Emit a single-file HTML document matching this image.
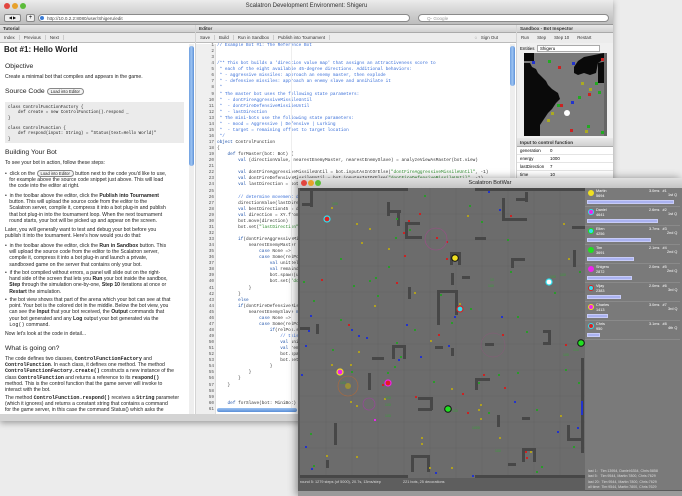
<!DOCTYPE html>
<html><head><meta charset="utf-8"><style>
*{margin:0;padding:0;box-sizing:border-box}
body{width:682px;height:496px;overflow:hidden;background:#ececec;font-family:"Liberation Sans",sans-serif;position:relative}
.a{position:absolute}
.win{left:0;top:0;width:613px;height:421px;background:#d4d4d4;box-shadow:0 2px 6px rgba(0,0,0,.35)}
.tb{left:0;top:0;width:613px;height:12px;background:linear-gradient(#ececec,#d2d2d2);font-size:6px;color:#333;text-align:center;line-height:12px}
.tl{top:3px;width:6px;height:6px;border-radius:50%}
.tool{left:0;top:12px;width:613px;height:13px;background:linear-gradient(#d2d2d2,#bdbdbd);border-bottom:1px solid #999}
.field{background:#fff;border:1px solid #8a8a8a;border-radius:4px;height:8px;font-size:4.6px;line-height:7px;color:#444;padding-left:8px}
.ph{height:8px;background:linear-gradient(#e8e8e8,#d0d0d0);font-size:4.6px;font-weight:bold;color:#333;line-height:8px;padding-left:3px;border-bottom:1px solid #aaa}
.bar{height:10px;background:#ececec;font-size:4.4px;color:#333;line-height:10px;border-bottom:1px solid #bbb}
.bar span{padding:0 4px;border-right:1px solid #ccc}
.tut{font-size:5.1px;line-height:6.2px;color:#222}
.tut h1{font-size:8px;font-weight:bold;position:absolute}
.tut h2{font-size:6.8px;font-weight:normal;position:absolute}
.tut p{position:absolute}
.btn{display:inline-block;border:1px solid #888;border-radius:4px;font-size:4.2px;padding:0 3px;line-height:5px;background:#f4f4f4}
.code{font-family:"Liberation Mono",monospace;font-size:4.4px;line-height:6.07px;white-space:pre;color:#333}
.ln{font-family:"Liberation Mono",monospace;font-size:4.4px;line-height:6.07px;white-space:pre;color:#555;text-align:right}
.c{color:#3a6fd8}.k{color:#2255aa}.s{color:#2a8a2a}
.sb div{font-size:4.4px}
.mono{font-family:"Liberation Mono",monospace}
.sc{font-size:3.8px;color:#fff;line-height:4.5px}
</style></head><body>
<div class="a win"></div>
<div class="a tb">Scalatron Development Environment: Shigeru</div>
<div class="a tl" style="left:4px;background:#e2463f"></div>
<div class="a tl" style="left:12px;background:#e7a12a"></div>
<div class="a tl" style="left:20px;background:#5cbc3a"></div>
<div class="a tool"></div>
<div class="a" style="left:4px;top:14px;width:17px;height:8px;border:1px solid #888;border-radius:2px;background:#eee;font-size:4px;line-height:6px;text-align:center">◀ ▶</div>
<div class="a" style="left:26px;top:14px;width:9px;height:8px;border:1px solid #888;border-radius:2px;background:#eee;font-size:6px;line-height:6px;text-align:center">+</div>
<div class="a field" style="left:38px;top:14px;width:372px">http://10.0.2.2:8080/user/Shigeru/edit</div>
<div class="a" style="left:40px;top:16px;width:4px;height:4px;border-radius:50%;background:#3a7bd5"></div>
<div class="a field" style="left:418px;top:14px;width:191px;color:#999">Q- Google</div>

<!-- Tutorial -->
<div class="a" style="left:0;top:25px;width:195px;height:389px;background:#fff"></div>
<div class="a ph" style="left:0;top:25px;width:195px">Tutorial</div>
<div class="a bar" style="left:0;top:33px;width:195px"><span>Index</span><span>Previous</span><span>Next</span></div>
<div class="a" style="left:189px;top:44px;width:5px;height:370px;background:#eee"></div>
<div class="a" style="left:189px;top:46px;width:5px;height:120px;background:linear-gradient(90deg,#6fa0e0,#9cc3f2,#5b8fd6);border-radius:3px"></div>
<div class="a tut" style="left:0;top:44px;width:188px;height:370px;overflow:hidden">
<h1 style="left:4px;top:3px">Bot #1: Hello World</h1>
<h2 style="left:5px;top:20px">Objective</h2>
<p style="left:5px;top:30px">Create a minimal bot that compiles and appears in the game.</p>
<h2 style="left:5px;top:44px">Source Code <span class="btn">Load into Editor</span></h2>
<div class="a mono" style="left:5px;top:58px;width:179px;height:41px;background:#ebebeb;font-size:4.2px;line-height:5.3px;white-space:pre;padding:4px 3px">class ControlFunctionFactory {
    def create = new ControlFunction().respond _
}

class ControlFunction {
    def respond(input: String) = "Status(text=Hello World)"
}</div>
<h2 style="left:5px;top:106px">Building Your Bot</h2>
<p style="left:5px;top:116px">To see your bot in action, follow these steps:</p>
<p style="left:5px;top:126px;width:180px">• &nbsp;click on the <span class="btn">Load into Editor</span> button next to the code you'd like to use,<br>&nbsp;&nbsp;&nbsp;for example above the source code snippet just above. This will load<br>&nbsp;&nbsp;&nbsp;the code into the editor at right.</p>
<p style="left:5px;top:149px;width:180px">• &nbsp;in the toolbar above the editor, click the <b>Publish into Tournament</b><br>&nbsp;&nbsp;&nbsp;button. This will upload the source code from the editor to the<br>&nbsp;&nbsp;&nbsp;Scalatron server, compile it, compress it into a bot plug-in and publish<br>&nbsp;&nbsp;&nbsp;that bot plug-in into the tournament loop. When the next tournament<br>&nbsp;&nbsp;&nbsp;round starts, your bot will be picked up and appear on the screen.</p>
<p style="left:5px;top:183px;width:180px">Later, you will generally want to test and debug your bot before you<br>publish it into the tournament. Here's how would you do that:</p>
<p style="left:5px;top:199px;width:180px">• &nbsp;in the toolbar above the editor, click the <b>Run in Sandbox</b> button. This<br>&nbsp;&nbsp;&nbsp;will upload the source code from the editor to the Scalatron server,<br>&nbsp;&nbsp;&nbsp;compile it, compress it into a bot plug-in and launch a private,<br>&nbsp;&nbsp;&nbsp;sandboxed game on the server that contains only your bot.</p>
<p style="left:5px;top:226px;width:180px">• &nbsp;if the bot compiled without errors, a panel will slide out on the right-<br>&nbsp;&nbsp;&nbsp;hand side of the screen that lets you <b>Run</b> your bot inside the sandbox,<br>&nbsp;&nbsp;&nbsp;<b>Step</b> through the simulation one-by-one, <b>Step 10</b> iterations at once or<br>&nbsp;&nbsp;&nbsp;<b>Restart</b> the simulation.</p>
<p style="left:5px;top:253px;width:180px">• &nbsp;the bot view shows that part of the arena which your bot can see at that<br>&nbsp;&nbsp;&nbsp;point. Your bot is the colored dot in the middle. Below the bot view, you<br>&nbsp;&nbsp;&nbsp;can see the <b>Input</b> that your bot received, the <b>Output</b> commands that<br>&nbsp;&nbsp;&nbsp;your bot generated and any <b>Log</b> output your bot generated via the<br>&nbsp;&nbsp;&nbsp;<span class="mono">Log()</span> command.</p>
<p style="left:5px;top:287px">Now let's look at the code in detail...</p>
<h2 style="left:5px;top:302px">What is going on?</h2>
<p style="left:5px;top:312px;width:182px">The code defines two classes, <b class="mono">ControlFunctionFactory</b> and<br><b class="mono">ControlFunction</b>. In each class, it defines one method. The method<br><b class="mono">ControlFunctionFactory.create()</b> constructs a new instance of the<br>class <b class="mono">ControlFunction</b> and returns a reference to its <b class="mono">respond()</b><br>method. This is the control function that the game server will invoke to<br>interact with the bot.</p>
<p style="left:5px;top:351px;width:182px">The method <b class="mono">ControlFunction.respond()</b> receives a <b class="mono">String</b> parameter<br>(which it ignores) and returns a constant string that contains a command<br>for the game server, in this case the command Status() which asks the</p>
</div>

<!-- Editor -->
<div class="a" style="left:196px;top:25px;width:320px;height:389px;background:#fff"></div>
<div class="a ph" style="left:196px;top:25px;width:320px">Editor</div>
<div class="a bar" style="left:196px;top:33px;width:320px"><span>Save</span><span>Build</span><span>Run in Sandbox</span><span>Publish into Tournament</span><i style="position:absolute;right:18px;font-style:normal">◌ &nbsp; Sign Out</i></div>
<div class="a" style="left:196px;top:44px;width:20px;height:370px;background:#efefef;border-right:1px solid #ddd"></div>
<div class="a ln" style="left:196px;top:43px;width:18px">1
2
3
4
5
6
7
8
9
10
11
12
13
14
15
16
17
18
19
20
21
22
23
24
25
26
27
28
29
30
31
32
33
34
35
36
37
38
39
40
41
42
43
44
45
46
47
48
49
50
51
52
53
54
55
56
57
58
59
60
61</div>
<div class="a code" style="left:217px;top:43px;width:292px;overflow:hidden"><span class="c">// Example Bot #1: The Reference Bot</span>


<span class="c">/** This bot builds a 'direction value map' that assigns an attractiveness score to
 * each of the eight available 45-degree directions. Additional behaviors:
 * - aggressive missiles: approach an enemy master, then explode
 * - defensive missiles: approach an enemy slave and annihilate it
 *
 * The master bot uses the following state parameters:
 *  - dontFireAggressiveMissileUntil
 *  - dontFireDefensiveMissileUntil
 *  - lastDirection
 * The mini-bots use the following state parameters:
 *  - mood = Aggressive | Defensive | Lurking
 *  - target = remaining offset to target location
 */</span>
<span class="k">object</span> ControlFunction
{
    <span class="k">def</span> forMaster(bot: Bot) {
        <span class="k">val</span> (directionValue, nearestEnemyMaster, nearestEnemySlave) = analyzeViewAsMaster(bot.view)

        <span class="k">val</span> dontFireAggressiveMissileUntil = bot.inputAsIntOrElse(<span class="s">"dontFireAggressiveMissileUntil"</span>, -1)
        <span class="k">val</span> dontFireDefensiveMissileUntil = bot.inputAsIntOrElse(<span class="s">"dontFireDefensiveMissileUntil"</span>, -1)
        <span class="k">val</span> lastDirection = bot.inputAsIntOrElse(<span class="s">"lastDirection"</span>, 0)

        <span class="c">// determine movement direction</span>
        directionValue(lastDirection) += 10
        <span class="k">val</span> bestDirection45 = directionValue.zipWithIndex.maxBy(_._1)._2
        <span class="k">val</span> direction = XY.fromDirection45(bestDirection45)
        bot.move(direction)
        bot.set(<span class="s">"lastDirection"</span> -> bestDirection45)

        <span class="k">if</span>(dontFireAggressiveMissileUntil &lt; bot.time)
            nearestEnemyMaster <span class="k">match</span> {
                <span class="k">case</span> None =>
                <span class="k">case</span> Some(relPos) =>
                    <span class="k">val</span> unitDelta = relPos.signum
                    <span class="k">val</span> remainder = relPos - unitDelta
                    bot.spawn(unitDelta)
                    bot.set(<span class="s">"dontFire"</span>)
            }
        }
        <span class="k">else</span>
        <span class="k">if</span>(dontFireDefensiveMissileUntil)
            nearestEnemySlave <span class="k">match</span> {
                <span class="k">case</span> None =>
                <span class="k">case</span> Some(relPos) =>
                    <span class="k">if</span>(relPos.stepCount)
                        <span class="c">// this</span>
                        <span class="k">val</span> unitDelta
                        <span class="k">val</span> remainder
                        bot.spawn
                        bot.set
                    }
            }
        }
    }


    <span class="k">def</span> forSlave(bot: MiniBot) {
</div>
<div class="a" style="left:291px;top:44px;width:1px;height:365px;background:#eee"></div>
<div class="a" style="left:510px;top:44px;width:5px;height:370px;background:#eee"></div>
<div class="a" style="left:510px;top:46px;width:5px;height:40px;background:linear-gradient(90deg,#6fa0e0,#9cc3f2,#5b8fd6);border-radius:3px"></div>
<div class="a" style="left:217px;top:408px;width:80px;height:4px;background:linear-gradient(#9cc3f2,#5b8fd6);border-radius:2px"></div>

<!-- Sandbox -->
<div class="a" style="left:517px;top:25px;width:96px;height:389px;background:#f0f0f0"></div>
<div class="a ph" style="left:517px;top:25px;width:96px">Sandbox - Bot Inspector</div>
<div class="a bar" style="left:517px;top:33px;width:96px;border:none"><span style="border:none">Run</span><span style="border:none">Step</span><span style="border:none">Step 10</span><span style="border:none">Restart</span></div>
<div class="a" style="left:517px;top:45px;width:96px;font-size:4.4px;line-height:8px;padding-left:3px">Entities</div>
<div class="a" style="left:537px;top:45px;width:63px;height:7px;background:#fff;border:1px solid #aaa;font-size:4.4px;line-height:5px;padding-left:2px">Shigeru</div>
<svg class="a" style="left:524px;top:53px" width="83" height="83">
<rect width="83" height="83" fill="#7a7a7a"/>
<polygon points="0,10 6,10 8,14 12,16 14,20 18,24 22,28 24,32 28,36 34,40 36,46 32,50 28,56 24,60 20,66 16,72 16,83 0,83" fill="#0a0a0a"/>
<polygon points="0,0 10,0 10,8 0,8" fill="#0a0a0a"/>
<polygon points="50,14 54,8 60,4 70,2 80,0 80,6 74,10 72,20 66,22 60,20 54,22 50,20" fill="#0a0a0a"/>
<polygon points="74,10 83,8 83,30 74,30" fill="#0a0a0a"/>
<rect x="80" y="0" width="3" height="83" fill="#666"/>
<circle cx="43" cy="60" r="3" fill="#fff"/>
<rect x="8" y="8" width="3" height="3" fill="#2233cc"/><rect x="24" y="7" width="3" height="3" fill="#22aa22"/><rect x="34" y="13" width="3" height="3" fill="#cc2222"/><rect x="48" y="9" width="3" height="3" fill="#2233cc"/><rect x="77" y="5" width="3" height="3" fill="#cc2222"/><rect x="57" y="29" width="3" height="3" fill="#aaaa22"/><rect x="71" y="29" width="3" height="3" fill="#22aa22"/><rect x="65" y="35" width="3" height="3" fill="#aaaa22"/><rect x="64" y="40" width="3" height="3" fill="#cc2222"/><rect x="74" y="38" width="3" height="3" fill="#22aa22"/><rect x="54" y="43" width="3" height="3" fill="#22aa22"/><rect x="47" y="48" width="3" height="3" fill="#2233cc"/><rect x="36" y="51" width="3" height="3" fill="#cc2222"/><rect x="33" y="51" width="3" height="3" fill="#22aa22"/><rect x="27" y="59" width="3" height="3" fill="#aaaa22"/><rect x="23" y="66" width="3" height="3" fill="#aaaa22"/><rect x="63" y="72" width="3" height="3" fill="#22aa22"/><rect x="46" y="76" width="3" height="3" fill="#cc2222"/><rect x="61" y="77" width="3" height="3" fill="#aaaa22"/><rect x="77" y="78" width="3" height="3" fill="#22aa22"/>
</svg>
<div class="a ph" style="left:517px;top:138px;width:96px;height:9px;line-height:9px">Input to control function</div>
<div class="a sb" style="left:517px;top:147px;width:96px;background:#fff">
<div style="height:8px;line-height:8px;padding-left:3px;border-bottom:1px solid #e4e4e4;position:relative">generation<span style="position:absolute;left:33px">0</span></div>
<div style="height:8px;line-height:8px;padding-left:3px;border-bottom:1px solid #e4e4e4;position:relative">energy<span style="position:absolute;left:33px">1000</span></div>
<div style="height:8px;line-height:8px;padding-left:3px;border-bottom:1px solid #e4e4e4;position:relative">lastDirection<span style="position:absolute;left:33px">7</span></div>
<div style="height:8px;line-height:8px;padding-left:3px;position:relative">time<span style="position:absolute;left:33px">10</span></div>
</div>

<!-- BotWar window -->
<div class="a" style="left:298px;top:178px;width:384px;height:318px;background:#5a5a5a;box-shadow:-2px 0 8px rgba(0,0,0,.4)"></div>
<div class="a" style="left:298px;top:178px;width:384px;height:10px;background:linear-gradient(#e0e0e0,#c4c4c4);font-size:5.5px;line-height:10px;text-align:center;color:#222">Scalatron BotWar</div>
<div class="a tl" style="left:301px;top:180px;background:#e2463f"></div>
<div class="a tl" style="left:308px;top:180px;background:#e7a12a"></div>
<div class="a tl" style="left:315px;top:180px;background:#5cbc3a"></div>
<svg class="a" style="left:300px;top:188px" width="285" height="290">
<rect width="285" height="290" fill="#6c6c6c"/>
<g stroke="#646464" stroke-width="0.6">
<path d="M26 0V290M52 0V290M78 0V290M104 0V290M130 0V290M156 0V290M182 0V290M208 0V290M234 0V290M260 0V290M0 26H285M0 52H285M0 78H285M0 104H285M0 130H285M0 156H285M0 182H285M0 208H285M0 234H285M0 260H285"/>
</g>
<g fill="#474747">
<rect x="0" y="0" width="108" height="3"/><rect x="175" y="0" width="110" height="3"/>
<rect x="0" y="287" width="108" height="3"/><rect x="175" y="287" width="110" height="3"/>
<rect x="10" y="2" width="3" height="17"/><rect x="2" y="15" width="10" height="3"/>
<rect x="87" y="14" width="3" height="14"/><rect x="87" y="22" width="14" height="3"/><rect x="97" y="22" width="3" height="16"/>
<rect x="105" y="34" width="15" height="3"/><rect x="105" y="48" width="17" height="3"/><rect x="105" y="34" width="3" height="17"/>
<rect x="202" y="10" width="3" height="22"/><rect x="202" y="30" width="25" height="3"/><rect x="216" y="10" width="12" height="3"/><rect x="225" y="4" width="3" height="10"/>
<rect x="175" y="49" width="11" height="3"/><rect x="272" y="38" width="13" height="3"/>
<rect x="211" y="70" width="14" height="3"/><rect x="211" y="70" width="3" height="10"/>
<rect x="273" y="62" width="3" height="17"/>
<rect x="150" y="65" width="3" height="12"/><rect x="158" y="65" width="3" height="12"/><rect x="150" y="64" width="11" height="3"/>
<rect x="151" y="85" width="3" height="12"/><rect x="162" y="88" width="8" height="3"/>
<rect x="108" y="99" width="3" height="12"/>
<rect x="137" y="102" width="20" height="3"/><rect x="137" y="102" width="3" height="35"/><rect x="155" y="102" width="3" height="25"/>
<rect x="0" y="139" width="10" height="3"/><rect x="16" y="136" width="3" height="10"/>
<rect x="92" y="157" width="13" height="3"/><rect x="92" y="157" width="3" height="14"/><rect x="103" y="157" width="3" height="14"/>
<rect x="72" y="169" width="12" height="3"/><rect x="135" y="158" width="8" height="3"/><rect x="151" y="160" width="3" height="8"/>
<rect x="185" y="155" width="9" height="3"/>
<rect x="243" y="142" width="8" height="3"/><rect x="248" y="142" width="3" height="15"/><rect x="243" y="154" width="8" height="3"/>
<rect x="68" y="185" width="3" height="17"/>
<rect x="175" y="190" width="15" height="3"/><rect x="175" y="190" width="3" height="12"/>
<rect x="118" y="209" width="14" height="3"/><rect x="130" y="209" width="3" height="13"/><rect x="118" y="220" width="14" height="3"/>
<rect x="197" y="227" width="3" height="12"/><rect x="222" y="229" width="8" height="3"/>
<rect x="34" y="235" width="3" height="22"/>
<rect x="267" y="237" width="3" height="16"/><rect x="267" y="250" width="14" height="3"/>
<rect x="281" y="170" width="3" height="95"/>
<rect x="111" y="267" width="3" height="17"/><rect x="111" y="267" width="18" height="3"/><rect x="127" y="267" width="3" height="17"/>
<rect x="222" y="260" width="3" height="14"/><rect x="222" y="260" width="13" height="3"/><rect x="233" y="260" width="3" height="14"/>
<rect x="208" y="275" width="8" height="3"/><rect x="26" y="272" width="3" height="8"/>
</g>
<rect x="281" y="213" width="2" height="14" fill="#2233cc"/>
<g>
<rect x="124" y="7" width="2" height="2" fill="#2a9a2a"/><rect x="31" y="19" width="2" height="2" fill="#b0a020"/><rect x="169" y="17" width="2" height="2" fill="#2a9a2a"/><rect x="188" y="3" width="2" height="2" fill="#2233cc"/><rect x="119" y="25" width="2" height="2" fill="#cc2222"/><rect x="96" y="30" width="2" height="2" fill="#2a9a2a"/><rect x="108" y="32" width="2" height="2" fill="#cc2222"/><rect x="167" y="27" width="2" height="2" fill="#b0a020"/><rect x="181" y="33" width="2" height="2" fill="#2a9a2a"/><rect x="199" y="21" width="2" height="2" fill="#2233cc"/><rect x="210" y="27" width="2" height="2" fill="#cc2222"/><rect x="263" y="35" width="2" height="2" fill="#b0a020"/>
<rect x="56" y="35" width="2" height="2" fill="#b0a020"/><rect x="69" y="40" width="2" height="2" fill="#b0a020"/><rect x="103" y="44" width="2" height="2" fill="#cc2222"/><rect x="109" y="41" width="2" height="2" fill="#2a9a2a"/><rect x="95" y="49" width="2" height="2" fill="#2a9a2a"/><rect x="136" y="49" width="2" height="2" fill="#cc2222"/><rect x="146" y="53" width="2" height="2" fill="#cc2222"/><rect x="207" y="51" width="2" height="2" fill="#2a9a2a"/><rect x="61" y="54" width="2" height="2" fill="#b0a020"/><rect x="88" y="60" width="2" height="2" fill="#b0a020"/>
<rect x="40" y="70" width="2" height="2" fill="#2a9a2a"/><rect x="104" y="67" width="2" height="2" fill="#cc2222"/><rect x="146" y="70" width="2" height="2" fill="#cc2222"/><rect x="268" y="70" width="2" height="2" fill="#b0a020"/><rect x="88" y="78" width="2" height="2" fill="#2a9a2a"/><rect x="210" y="83" width="2" height="2" fill="#2a9a2a"/><rect x="279" y="83" width="2" height="2" fill="#2a9a2a"/>
<rect x="3" y="93" width="2" height="2" fill="#2a9a2a"/><rect x="21" y="91" width="2" height="2" fill="#cc2222"/><rect x="69" y="92" width="2" height="2" fill="#2a9a2a"/><rect x="75" y="89" width="2" height="2" fill="#2a9a2a"/><rect x="53" y="97" width="2" height="2" fill="#2a9a2a"/><rect x="96" y="94" width="2" height="2" fill="#cc2222"/><rect x="114" y="104" width="2" height="2" fill="#b0a020"/><rect x="77" y="107" width="2" height="2" fill="#2a9a2a"/><rect x="140" y="106" width="2" height="2" fill="#2a9a2a"/><rect x="254" y="104" width="2" height="2" fill="#2a9a2a"/>
<rect x="13" y="112" width="2" height="2" fill="#2a9a2a"/><rect x="74" y="117" width="2" height="2" fill="#b0a020"/><rect x="159" y="115" width="2" height="2" fill="#b0a020"/><rect x="170" y="120" width="2" height="2" fill="#2a9a2a"/><rect x="10" y="127" width="2" height="2" fill="#2233cc"/><rect x="40" y="131" width="2" height="2" fill="#2a9a2a"/><rect x="154" y="128" width="2" height="2" fill="#2233cc"/><rect x="201" y="128" width="2" height="2" fill="#2233cc"/><rect x="217" y="128" width="2" height="2" fill="#2a9a2a"/>
<rect x="48" y="136" width="2" height="2" fill="#cc2222"/><rect x="106" y="136" width="2" height="2" fill="#2233cc"/><rect x="151" y="134" width="2" height="2" fill="#2a9a2a"/><rect x="8" y="142" width="2" height="2" fill="#2233cc"/><rect x="51" y="141" width="2" height="2" fill="#2233cc"/><rect x="114" y="141" width="2" height="2" fill="#2a9a2a"/><rect x="226" y="143" width="2" height="2" fill="#2a9a2a"/><rect x="58" y="147" width="2" height="2" fill="#2233cc"/><rect x="66" y="149" width="2" height="2" fill="#2233cc"/><rect x="138" y="146" width="2" height="2" fill="#cc2222"/><rect x="202" y="146" width="2" height="2" fill="#cc2222"/>
<rect x="96" y="154" width="2" height="2" fill="#2a9a2a"/><rect x="130" y="152" width="2" height="2" fill="#b0a020"/><rect x="5" y="157" width="2" height="2" fill="#2233cc"/><rect x="148" y="157" width="2" height="2" fill="#2233cc"/><rect x="265" y="156" width="2" height="2" fill="#cc2222"/><rect x="32" y="161" width="2" height="2" fill="#2a9a2a"/><rect x="58" y="163" width="2" height="2" fill="#b0a020"/><rect x="100" y="168" width="2" height="2" fill="#2a9a2a"/><rect x="98" y="171" width="2" height="2" fill="#2233cc"/><rect x="120" y="168" width="2" height="2" fill="#2233cc"/>
<rect x="31" y="176" width="2" height="2" fill="#b0a020"/><rect x="50" y="176" width="2" height="2" fill="#b0a020"/><rect x="94" y="178" width="2" height="2" fill="#2a9a2a"/><rect x="1" y="186" width="2" height="2" fill="#2233cc"/><rect x="51" y="183" width="2" height="2" fill="#2a9a2a"/><rect x="87" y="184" width="2" height="2" fill="#2a9a2a"/><rect x="183" y="186" width="2" height="2" fill="#cc2222"/><rect x="198" y="186" width="2" height="2" fill="#2a9a2a"/><rect x="217" y="184" width="2" height="2" fill="#2a9a2a"/><rect x="265" y="181" width="2" height="2" fill="#2a9a2a"/>
<rect x="82" y="196" width="2" height="2" fill="#cc2222"/><rect x="133" y="193" width="2" height="2" fill="#2a9a2a"/><rect x="178" y="194" width="2" height="2" fill="#2a9a2a"/><rect x="204" y="199" width="2" height="2" fill="#cc2222"/><rect x="278" y="194" width="2" height="2" fill="#2a9a2a"/><rect x="151" y="200" width="2" height="2" fill="#b0a020"/><rect x="162" y="205" width="2" height="2" fill="#cc2222"/><rect x="115" y="208" width="2" height="2" fill="#cc2222"/><rect x="84" y="210" width="2" height="2" fill="#b0a020"/><rect x="50" y="213" width="2" height="2" fill="#b0a020"/><rect x="214" y="213" width="2" height="2" fill="#2233cc"/><rect x="56" y="217" width="2" height="2" fill="#b0a020"/><rect x="180" y="216" width="2" height="2" fill="#b0a020"/><rect x="178" y="221" width="2" height="2" fill="#b0a020"/><rect x="236" y="221" width="2" height="2" fill="#2a9a2a"/><rect x="167" y="224" width="2" height="2" fill="#cc2222"/><rect x="188" y="224" width="2" height="2" fill="#2a9a2a"/><rect x="180" y="230" width="2" height="2" fill="#b0a020"/><rect x="260" y="227" width="2" height="2" fill="#b0a020"/><rect x="74" y="231" width="2" height="2" fill="#ee22ee"/>
<rect x="10" y="245" width="2" height="2" fill="#2a9a2a"/><rect x="257" y="243" width="2" height="2" fill="#2233cc"/><rect x="277" y="239" width="2" height="2" fill="#2233cc"/><rect x="121" y="249" width="2" height="2" fill="#b0a020"/><rect x="199" y="249" width="2" height="2" fill="#b0a020"/><rect x="273" y="258" width="2" height="2" fill="#2a9a2a"/><rect x="5" y="258" width="2" height="2" fill="#2233cc"/><rect x="121" y="255" width="2" height="2" fill="#b0a020"/><rect x="225" y="263" width="2" height="2" fill="#cc2222"/><rect x="230" y="263" width="2" height="2" fill="#b0a020"/><rect x="26" y="267" width="2" height="2" fill="#b0a020"/><rect x="56" y="268" width="2" height="2" fill="#b0a020"/><rect x="226" y="269" width="2" height="2" fill="#cc2222"/><rect x="13" y="277" width="2" height="2" fill="#2a9a2a"/><rect x="11" y="280" width="2" height="2" fill="#2233cc"/><rect x="129" y="279" width="2" height="2" fill="#b0a020"/><rect x="151" y="279" width="2" height="2" fill="#b0a020"/><rect x="241" y="278" width="2" height="2" fill="#2a9a2a"/><rect x="135" y="284" width="2" height="2" fill="#2233cc"/><rect x="172" y="287" width="2" height="2" fill="#2233cc"/><rect x="236" y="283" width="2" height="2" fill="#2a9a2a"/>
</g>
<circle cx="136" cy="51" r="11" fill="none" stroke="#a04a8a" stroke-width="0.6"/>
<circle cx="48" cy="198" r="10" fill="none" stroke="#b06a3a" stroke-width="0.6"/>
<circle cx="69" cy="216" r="6" fill="none" stroke="#a040a0" stroke-width="0.6"/>
<circle cx="193" cy="157" r="12" fill="none" stroke="#8a5a7a" stroke-width="0.5"/>
<circle cx="48" cy="198" r="3" fill="#b0a020" opacity=".7"/>
<g font-family="Liberation Sans" font-size="3.5" fill="#3aa03a">
<text x="32" y="17">100</text><text x="250" y="90">100</text><text x="260" y="88">100</text><text x="190" y="93">10</text><text x="188" y="99">100</text><text x="273" y="163">100</text><text x="263" y="168">100</text><text x="40" y="196">100</text><text x="85" y="211">100</text><text x="85" y="218">100</text><text x="85" y="229">100</text><text x="152" y="224">100</text><text x="172" y="241">1000</text><text x="195" y="264">100</text>
</g>
<g stroke="#111" stroke-width="1">
<circle cx="155" cy="70" r="3.3" fill="#f0e020"/>
<circle cx="27" cy="31" r="3" fill="#e02020" stroke="#30e0f0" stroke-width="1.2"/>
<circle cx="249" cy="94" r="3" fill="#fff" stroke="#30e0f0" stroke-width="1.2"/>
<circle cx="160" cy="121" r="3" fill="#30e0f0" stroke="#e02020" stroke-width="1.2"/>
<circle cx="40" cy="184" r="3" fill="#ee22ee" stroke="#f0e020" stroke-width="1.2"/>
<circle cx="88" cy="195" r="3" fill="#e02020" stroke="#ee22ee" stroke-width="1.2"/>
<circle cx="148" cy="221" r="3.3" fill="#20e020"/>
<circle cx="281" cy="155" r="3.3" fill="#20e020"/>
</g>
</svg>
<!-- scoreboard -->
<div class="a" style="left:585px;top:188px;width:97px;height:302px;background:#7a7a7a"></div>
<div class="a" style="left:585px;top:188px;width:95px">
<div style="position:relative;height:19px;border-bottom:1px solid #8a8a8a"><i style="position:absolute;left:3px;top:2px;width:6px;height:6px;border-radius:50%;background:#f0e020"></i><div class="sc" style="position:absolute;left:11px;top:1px">Martin<br>5694</div><div class="sc" style="position:absolute;left:64px;top:1px">3.0ms &nbsp;&nbsp;#1</div><div class="sc" style="position:absolute;left:83px;top:5px">1st Q</div><i style="position:absolute;left:2px;top:12px;width:87px;height:4px;background:#aab2f0;border:1px solid #c8ccf8"></i></div>
<div style="position:relative;height:19px;border-bottom:1px solid #8a8a8a"><i style="position:absolute;left:3px;top:2px;width:6px;height:6px;border-radius:50%;background:#ee22ee;border:1px solid #30e0f0"></i><div class="sc" style="position:absolute;left:11px;top:1px">Daniel<br>4641</div><div class="sc" style="position:absolute;left:64px;top:1px">2.6ms &nbsp;&nbsp;#2</div><div class="sc" style="position:absolute;left:83px;top:5px">1st Q</div><i style="position:absolute;left:2px;top:12px;width:71px;height:4px;background:#aab2f0;border:1px solid #c8ccf8"></i></div>
<div style="position:relative;height:19px;border-bottom:1px solid #8a8a8a"><i style="position:absolute;left:3px;top:2px;width:6px;height:6px;border-radius:50%;background:#30e0f0;border:1px solid #20e020"></i><div class="sc" style="position:absolute;left:11px;top:1px">Ellen<br>4256</div><div class="sc" style="position:absolute;left:64px;top:1px">3.7ms &nbsp;&nbsp;#3</div><div class="sc" style="position:absolute;left:82px;top:5px">2nd Q</div><i style="position:absolute;left:2px;top:12px;width:64px;height:4px;background:#aab2f0;border:1px solid #c8ccf8"></i></div>
<div style="position:relative;height:19px;border-bottom:1px solid #8a8a8a"><i style="position:absolute;left:3px;top:2px;width:6px;height:6px;border-radius:50%;background:#20e020"></i><div class="sc" style="position:absolute;left:11px;top:1px">Tim<br>3691</div><div class="sc" style="position:absolute;left:64px;top:1px">2.1ms &nbsp;&nbsp;#4</div><div class="sc" style="position:absolute;left:82px;top:5px">2nd Q</div><i style="position:absolute;left:2px;top:12px;width:47px;height:4px;background:#aab2f0;border:1px solid #c8ccf8"></i></div>
<div style="position:relative;height:19px;border-bottom:1px solid #8a8a8a"><i style="position:absolute;left:3px;top:2px;width:6px;height:6px;border-radius:50%;background:#ee22ee"></i><div class="sc" style="position:absolute;left:11px;top:1px">Shigeru<br>2872</div><div class="sc" style="position:absolute;left:64px;top:1px">2.0ms &nbsp;&nbsp;#5</div><div class="sc" style="position:absolute;left:82px;top:5px">2nd Q</div><i style="position:absolute;left:2px;top:12px;width:45px;height:4px;background:#aab2f0;border:1px solid #c8ccf8"></i></div>
<div style="position:relative;height:19px;border-bottom:1px solid #8a8a8a"><i style="position:absolute;left:3px;top:2px;width:6px;height:6px;border-radius:50%;background:#30e0f0;border:1px solid #e02020"></i><div class="sc" style="position:absolute;left:11px;top:1px">Vijay<br>2383</div><div class="sc" style="position:absolute;left:64px;top:1px">2.0ms &nbsp;&nbsp;#6</div><div class="sc" style="position:absolute;left:83px;top:5px">3rd Q</div><i style="position:absolute;left:2px;top:12px;width:34px;height:4px;background:#aab2f0;border:1px solid #c8ccf8"></i></div>
<div style="position:relative;height:19px;border-bottom:1px solid #8a8a8a"><i style="position:absolute;left:3px;top:2px;width:6px;height:6px;border-radius:50%;background:#ee22ee;border:1px solid #f0e020"></i><div class="sc" style="position:absolute;left:11px;top:1px">Charles<br>1413</div><div class="sc" style="position:absolute;left:64px;top:1px">3.0ms &nbsp;&nbsp;#7</div><div class="sc" style="position:absolute;left:83px;top:5px">3rd Q</div><i style="position:absolute;left:2px;top:12px;width:21px;height:4px;background:#aab2f0;border:1px solid #c8ccf8"></i></div>
<div style="position:relative;height:19px;border-bottom:1px solid #8a8a8a"><i style="position:absolute;left:3px;top:2px;width:6px;height:6px;border-radius:50%;background:#e02020;border:1px solid #30e0f0"></i><div class="sc" style="position:absolute;left:11px;top:1px">Chris<br>950</div><div class="sc" style="position:absolute;left:64px;top:1px">3.1ms &nbsp;&nbsp;#8</div><div class="sc" style="position:absolute;left:83px;top:5px">4th Q</div><i style="position:absolute;left:2px;top:12px;width:13px;height:4px;background:#aab2f0;border:1px solid #c8ccf8"></i></div>
</div>
<div class="a sc" style="left:588px;top:469px;color:#ddd;font-size:3.6px;line-height:5.3px;white-space:pre">last 1:   Tim:13954, Daniel:6354, Chris:5858
last 5:   Tim:9544, Martin:7800, Chris:7629
last 20:  Tim:9544, Martin:7800, Chris:7629
all time: Tim:9544, Martin:7800, Chris:7629</div>
<div class="a" style="left:298px;top:478px;width:287px;height:13px;background:#5e5e5e"></div>
<div class="a sc" style="left:300px;top:480px;color:#ddd">round 5: 1279 steps (of 5000), 20.7s, 13ms/step</div>
<div class="a sc" style="left:403px;top:480px;color:#ddd">221 bots, 25 decorations</div>
<div class="a" style="left:298px;top:491px;width:384px;height:5px;background:#9a9a9a"></div>
</body></html>
